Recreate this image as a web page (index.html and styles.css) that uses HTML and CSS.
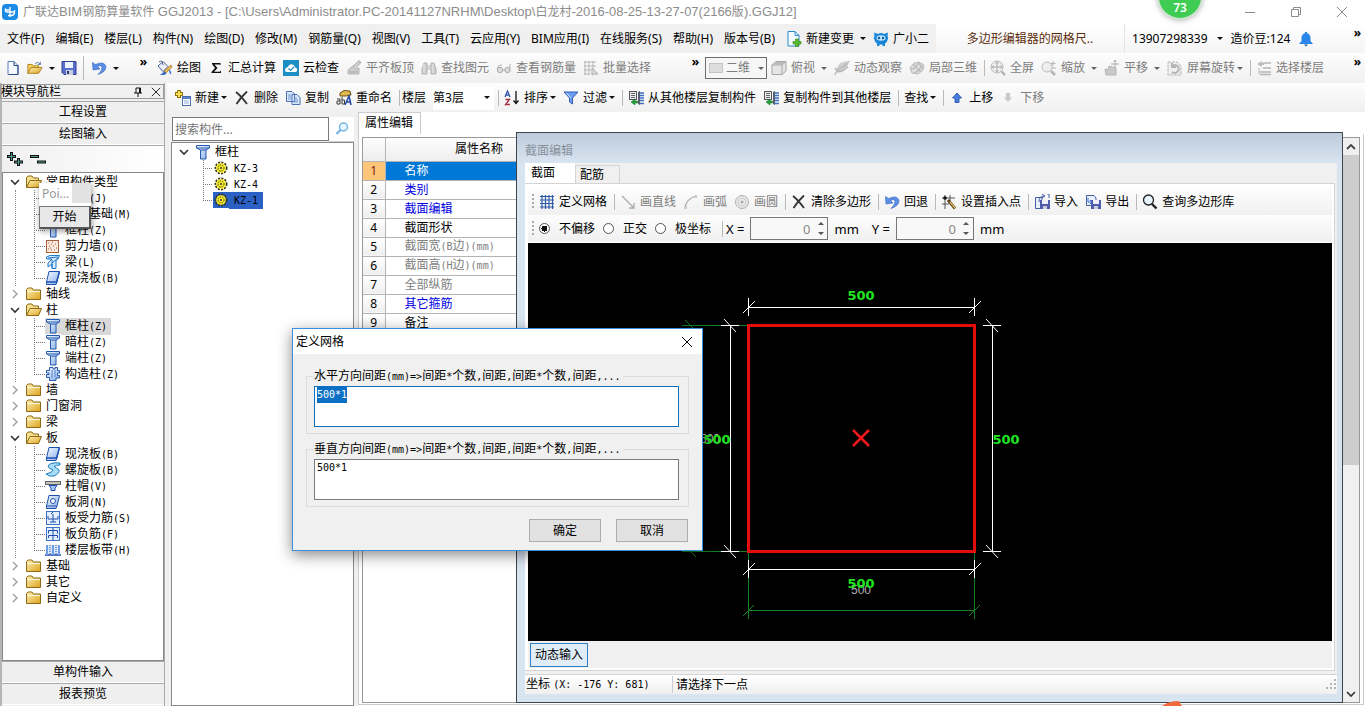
FILE: index.html
```html
<!DOCTYPE html>
<html lang="zh-CN">
<head>
<meta charset="utf-8">
<title>广联达BIM钢筋算量软件 GGJ2013</title>
<link rel="stylesheet" href="styles.css">
</head>
<body>
<svg class="defs" width="0" height="0" aria-hidden="true">
<defs>
<linearGradient id="gold" x1="0" y1="0" x2="1" y2="1"><stop offset="0" stop-color="#fff3b8"/><stop offset="1" stop-color="#dca21e"/></linearGradient>
<linearGradient id="blue" x1="0" y1="0" x2="1" y2="1"><stop offset="0" stop-color="#f4f9ff"/><stop offset="1" stop-color="#86aeea"/></linearGradient>
<symbol id="i-app" viewBox="0 0 16 16"><rect width="16" height="16" rx="4" fill="#1b8be6"/><path d="M3.500 4.500V7Q3.500 8 5 8H13M12.500 6V8Q12.500 11.500 9 11.500H6M8 3V13M4 6H7" fill="none" stroke="#fff" stroke-width="1.400"/></symbol>
<symbol id="i-new" viewBox="0 0 16 16"><path d="M3 1.500H9L13 5.500V14.500H3Z" fill="#f5f9ff" stroke="#5b7fb9"/><path d="M9 1.500V5.500H13V14.500H4" fill="none" stroke="#27477f"/></symbol>
<symbol id="i-open" viewBox="0 0 18 16"><path d="M1 14V4H6L7 5.500H13V8" fill="#f3cf62" stroke="#a87b12"/><path d="M1 14L4.500 7.500H17L13 14Z" fill="url(#gold)" stroke="#a87b12"/><path d="M9 3Q12 0 15 3.500M15 1V4H12" fill="none" stroke="#52749f"/></symbol>
<symbol id="i-save" viewBox="0 0 16 16"><path d="M1 1.500H15V14.500H3L1 12.500Z" fill="#5a6fd0" stroke="#34408f"/><rect x="4" y="2" width="8" height="6" fill="#eef3ff"/><rect x="5" y="10" width="7" height="5" fill="#c8cde0"/><rect x="6" y="11" width="2" height="3" fill="#333c78"/></symbol>
<symbol id="i-undo" viewBox="0 0 16 16"><path d="M1.500 2.500L2 10L9 9L6.500 6.500Q10.500 4.500 11 7.500Q11 11 7 14.500Q15 12 15 6.500Q13 .5 4.500 4.500Z" fill="#5c8ee6" stroke="#3163bd" stroke-width=".6"/></symbol>
<symbol id="i-paint" viewBox="0 0 16 16"><path d="M1 6L6 1.500L11 6.500L6 11.500Z" fill="#e9eef8" stroke="#4a5e8c"/><path d="M2 2Q5 -1 6 5" fill="none" stroke="#4a5e8c"/><path d="M14 5L15 7L9 13L7 11Z" fill="#e7b850" stroke="#8a6512" stroke-width=".6"/><path d="M7 11L9.500 13.500Q7 16 3 14.500Q6 14 7 11Z" fill="#3767b8"/><path d="M12 9Q15 12 14 14Q12 15 12 9" fill="#4b7cda"/></symbol>
<symbol id="i-sum" viewBox="0 0 16 16"><path d="M4 3H12.500V5.500L11.500 4.500H6.500L9.500 8L6 11.700H11.700L13 10.500V13H3.500V12L7 8L4 4Z" fill="#111"/></symbol>
<symbol id="i-cloud" viewBox="0 0 16 16"><rect width="16" height="16" fill="#1d8fc4"/><path d="M3.500 12Q1 11 2.500 8.500Q3.500 7 5 7Q6 3.500 9.500 4.500Q11.500 5 12 7.500Q15 8 14 11Q13.500 12 12 12Z" fill="#fff"/><path d="M5.500 8.500L7.500 10.500L11 7" fill="none" stroke="#1d8fc4" stroke-width="1.200"/></symbol>
<symbol id="i-align" viewBox="0 0 16 16"><path d="M2 10L8 5L8 8H13V14H2Z" fill="#ccc" stroke="#b5b5b5"/><path d="M8 6L13 1L14.500 2.500L10 7M3 12H12" fill="none" stroke="#b5b5b5" stroke-width="1.500"/></symbol>
<symbol id="i-binoc" viewBox="0 0 16 16"><path d="M3 3H6V6H10V3H13L15 9V14H10V9H6V14H1V9Z" fill="#c9c9c9" stroke="#b5b5b5"/><path d="M3 4V13M12 4V13M8 6V9" stroke="#eee"/></symbol>
<symbol id="i-glasses" viewBox="0 0 16 16"><path d="M7 10.500Q8 9 9 10.500M1 9Q3 4 6 5M15 4Q13 4 14 9" fill="none" stroke="#aaa"/><circle cx="4" cy="10" r="2.700" fill="#ddd" stroke="#aaa"/><circle cx="11.500" cy="10" r="2.700" fill="#ddd" stroke="#aaa"/></symbol>
<symbol id="i-batch" viewBox="0 0 16 16"><path d="M1 2H13M1 6H13M1 10H8M1 14H7M2 1V15M6 1V15M10 1V9" stroke="#b5b5b5" fill="none"/><path d="M9 8L15 14H11L9 15Z" fill="#ddd" stroke="#aaa"/></symbol>
<symbol id="i-rect" viewBox="0 0 16 16"><rect x="1.500" y="3.500" width="13" height="9" fill="#ddd" stroke="#c3c3c3"/></symbol>
<symbol id="i-cube" viewBox="0 0 16 16"><path d="M1 5L5 1.500H15V11L11 14.500H1Z" fill="#e6e6e6" stroke="#a5a5a5"/><path d="M1 5H11V14.500M11 5L15 1.500" fill="none" stroke="#a5a5a5"/><path d="M2 4.500L5 2H14L11 4.500Z" fill="#bbb"/></symbol>
<symbol id="i-orbit" viewBox="0 0 16 16"><path d="M2 9L6 3L13 1L14 6L9 12L3 13Z" fill="#cfcfcf"/><path d="M1 15Q2 10 8 7T15 1M1 8Q4 15 14 7" fill="none" stroke="#b5b5b5" stroke-width="1.300"/></symbol>
<symbol id="i-local" viewBox="0 0 16 16"><path d="M1 8L5 3L10 2L15 5L14 10L9 14L3 13Z" fill="#dedede" stroke="#bbb"/><path d="M4 4L12 12M9 2L14 9M2 9Q7 9 9 3M5 13Q11 11 13 5" fill="none" stroke="#bbb" stroke-width="1.300"/></symbol>
<symbol id="i-fit" viewBox="0 0 16 16"><circle cx="7" cy="7" r="6" fill="#eee" stroke="#b5b5b5"/><path d="M7 2V12M2 7H12M5.500 3.500L7 2L8.500 3.500M5.500 10.500L7 12L8.500 10.500M3.500 5.500L2 7L3.500 8.500M10.500 5.500L12 7L10.500 8.500" fill="none" stroke="#aaa"/><path d="M11.500 11.500L15 15" stroke="#aaa" stroke-width="2"/></symbol>
<symbol id="i-zoomg" viewBox="0 0 16 16"><circle cx="6" cy="7" r="5" fill="#eee" stroke="#bbb"/><path d="M10 11L14 15" stroke="#b5b5b5" stroke-width="2.500"/><path d="M12 1V6M9.500 3.500H14.500M11 8H15" stroke="#b5b5b5"/></symbol>
<symbol id="i-pan" viewBox="0 0 16 16"><path d="M2 15L1 9L4 10L5 6L12 8L12 15Z" fill="#c9c9c9" stroke="#b5b5b5"/><path d="M11 0V8M7 4H15M9.500 1.500L11 0L12.500 1.500" stroke="#aaa" fill="none"/></symbol>
<symbol id="i-rot" viewBox="0 0 16 16"><path d="M1 2H10L14 6V15H1Z" fill="#eee" stroke="#b5b5b5" stroke-dasharray="3 1"/><path d="M5 6A4 4 0 1 1 5 12M5 3V7H9" fill="none" stroke="#b5b5b5" stroke-width="2"/></symbol>
<symbol id="i-floors" viewBox="0 0 16 16"><path d="M7 3H15M7 8H15M4 12H15M4 14.500H15" stroke="#b5b5b5" stroke-width="1.500"/><path d="M6 1L1 4L6 7V5H8V3H6Z" fill="#bbb"/><path d="M3 8V14" stroke="#b5b5b5"/></symbol>
<symbol id="i-add" viewBox="0 0 16 16"><path d="M4 0V8M0 4H8" stroke="#93720c" stroke-width="4"/><path d="M4 1V7M1 4H7" stroke="#f7df4e" stroke-width="2"/><rect x="7.500" y="6.500" width="8" height="9" fill="#fff" stroke="#4b6ea8"/><path d="M8 8H15" stroke="#5681cc" stroke-width="2"/><path d="M9 11H14M9 13H14" stroke="#8badde"/></symbol>
<symbol id="i-x" viewBox="0 0 16 16"><path d="M2 2Q7 6 13 14M13 1.500Q7 7 2.500 14" fill="none" stroke="#333" stroke-width="1.800"/></symbol>
<symbol id="i-copy" viewBox="0 0 16 16"><path d="M1.500 1.500H7L9.500 4V11.500H1.500ZM7 4.500H12L15 7.500V14.500H7Z" fill="#dce8fb" stroke="#4b6fb5"/><path d="M3 5H6M3 7H6M3 9H6M9 8H12M9 10H13M9 12H13" stroke="#6f93d2"/></symbol>
<symbol id="i-ren" viewBox="0 0 16 16"><path d="M4 3L8 .5L14 1L15 5L10 6L4 6Z" fill="#e1b84d" stroke="#6b5116"/><path d="M1 9H4V14H1V11H4M6 7V14H8.500V10H6" fill="none" stroke="#3d3d3d"/><path d="M9 15L13 6L15 15M10 12H14.500" fill="none" stroke="#294da3" stroke-width="1.600"/></symbol>
<symbol id="i-sort" viewBox="0 0 16 16"><path d="M1 7L3.500 1L6 7M2 5H5" fill="none" stroke="#3058a8" stroke-width="1.300"/><path d="M1.500 9.500H5.500L1.500 14.500H6" fill="none" stroke="#a23344" stroke-width="1.300"/><path d="M12 1V13M9.500 10.500L12 13.500L14.500 10.500" fill="none" stroke="#111" stroke-width="1.300"/></symbol>
<symbol id="i-filter" viewBox="0 0 16 16"><path d="M1 2H15L9.500 8V14L6.500 12V8Z" fill="#6b9df0" stroke="#2f5fb6"/><path d="M3.500 3L8 8" stroke="#d9e8ff"/></symbol>
<symbol id="i-cpf" viewBox="0 0 16 16"><rect x="1.500" y="1.500" width="7" height="8" fill="#e8ecf2" stroke="#555"/><path d="M3 3.500H7M3 5.500H7M3 7.500H7" stroke="#666"/><path d="M10 2L12 1V15L10 14Z" fill="#555f70"/><path d="M12 3H16M12 5.500H16M12 8H16M12 10.500H16M12 13.500H16" stroke="#3f6fc0" stroke-width="1.600"/><path d="M7 9L3 12L7 15V13H9.500V11H7Z" fill="#22a03a" stroke="#0f6b22" stroke-width=".5"/></symbol>
<symbol id="i-up" viewBox="0 0 16 16"><path d="M8 3L12.500 8H10V12.500H6V8H3.500Z" fill="#4a7fe0" stroke="#1d47a3" stroke-width=".8"/></symbol>
<symbol id="i-down" viewBox="0 0 16 16"><path d="M8 12L12 7.500H10V3H6V7.500H4Z" fill="#c9c9c9"/></symbol>
<symbol id="i-doc" viewBox="0 0 16 16"><path d="M2 .5H9L13 4.500V15H2Z" fill="#f3faff" stroke="#2c88c6"/><path d="M9 .5V4.500H13" fill="none" stroke="#2c88c6"/><path d="M9.500 8H12.500V10.500H15V13H12.500V15.500H9.500V13H7V10.500H9.500Z" fill="#5cb82e" stroke="#2f8a16" stroke-width=".6"/></symbol>
<symbol id="i-robot" viewBox="0 0 16 16"><path d="M1 1.500L5 3Q8 1 11 3L15 1.500L14.500 5Q16 7 14.500 9Q14 12 12 12.500V15H9.500V13.500H6.500V15H4V12.500Q2 12 1.500 9Q0 7 1.500 5Z" fill="#1a86d8"/><ellipse cx="8" cy="7" rx="4.500" ry="2.800" fill="#bfe4fb"/><circle cx="6" cy="7" r="1.200" fill="#145c9e"/><circle cx="10" cy="7" r="1.200" fill="#145c9e"/></symbol>
<symbol id="i-bell" viewBox="0 0 16 16"><path d="M7 1H9V2Q12 3 12.500 6V10L15 13H1L3.500 10V6Q4 3 7 2Z" fill="#2a86e8"/><path d="M6 13.500H10L8 15.500Z" fill="#174f93"/></symbol>
<symbol id="i-mag" viewBox="0 0 16 16"><circle cx="9.500" cy="6" r="4" fill="#eaf6ff" stroke="#6fb4e0" stroke-width="1.500"/><path d="M6.500 9L2.500 13" stroke="#6fb4e0" stroke-width="2.200"/></symbol>
<symbol id="i-mag2" viewBox="0 0 16 16"><circle cx="6.500" cy="6" r="5" fill="#e8f4ff" stroke="#222" stroke-width="1.300"/><path d="M10 10L14.500 14.500" stroke="#222" stroke-width="2.400"/></symbol>
<symbol id="i-folder" viewBox="0 0 16 16"><path d="M.5 13.500V3.500L2 2H6L7.500 4H14.500V13.500Z" fill="url(#gold)" stroke="#8f6914"/><path d="M1.500 5.500H14" stroke="#fff8d8"/></symbol>
<symbol id="i-fopen" viewBox="0 0 16 16"><path d="M.5 13.500V3.500L2 2H6L7.500 4H12.500V7" fill="#f6df8e" stroke="#8f6914"/><path d="M.5 13.500L4 6.500H15.500L12.500 13.500Z" fill="url(#gold)" stroke="#8f6914"/></symbol>
<symbol id="i-col" viewBox="0 0 16 16"><path d="M1.500 1.500H14.500V4L11 6V15H5.500V6L1.500 4Z" fill="url(#blue)" stroke="#2558b0"/><path d="M2 4H14M5.500 6H11" stroke="#2558b0"/></symbol>
<symbol id="i-wall" viewBox="0 0 16 16"><rect x="1.500" y="2.500" width="12" height="12" fill="#fbe9df" stroke="#a3613c"/><path d="M3 5H4M7 4H8M10 6H11M4 8H5M8 8H9M11 10H12M3 11H4M6 12H7M9 12H10M6 6H7M5 10H6" stroke="#9a5c42"/></symbol>
<symbol id="i-beam" viewBox="0 0 16 16"><path d="M1.500 3L5 1.500H14.500L13 5L11 6V14.500H7V10L3 13V9L7 5H1.500Z" fill="#d8ecff" stroke="#1f77c8"/><path d="M3 4L13 3M7 9L13 4M7 6V14" stroke="#1f77c8" fill="none"/></symbol>
<symbol id="i-slab" viewBox="0 0 16 16"><path d="M4 1.500H14.500L12 12L11 14.500H1.500V12Z" fill="url(#blue)" stroke="#1e4fae"/><path d="M1.500 12H11.500L14.500 1.500" fill="none" stroke="#1e4fae" stroke-width="1.300"/></symbol>
<symbol id="i-ccol" viewBox="0 0 16 16"><path d="M4.500 1.500H8V3H10V1.500H12.500V4.500H14.500V7H12.500V9.500H14.500V12H11V14.500H4.500V11.500H1.500V8.500H4V7H1.500V4.500H4.500Z" fill="url(#blue)" stroke="#2558b0"/><path d="M10 4V11M7 4V12" fill="none" stroke="#5a86d0"/></symbol>
<symbol id="i-spiral" viewBox="0 0 16 16"><path d="M15 1Q5 0 3 4Q3 6 8 8Q8 10 1 12Q4 15 9 14Q15 11 14 8Q12 6 9 4.500Q11 3 15 3Z" fill="#a8dcf8" stroke="#1c7dbd"/></symbol>
<symbol id="i-cap" viewBox="0 0 16 16"><rect x=".5" y="3.500" width="15" height="3" fill="#c9c3ae" stroke="#5b6470"/><path d="M4 7.500H12L10 10V12.500H6V10Z" fill="#a8c8f5" stroke="#1e4fae"/></symbol>
<symbol id="i-hole" viewBox="0 0 16 16"><path d="M4 1.500H14.500L12 12L11 14.500H1.500V12Z" fill="url(#blue)" stroke="#1e4fae"/><circle cx="8" cy="7" r="2.500" fill="#fff" stroke="#1e4fae"/><path d="M1.500 12H11.500" stroke="#1e4fae"/></symbol>
<symbol id="i-rebar" viewBox="0 0 16 16"><rect x="1.500" y="1.500" width="13" height="13" fill="#e3eeff" stroke="#3d71c5"/><path d="M3 6V9H13V6M8 2L6 4M8 4V12M5 12H11" fill="none" stroke="#1e4fae"/></symbol>
<symbol id="i-neg" viewBox="0 0 16 16"><rect x="1.500" y="1.500" width="13" height="13" fill="#e3eeff" stroke="#3d71c5"/><path d="M3.500 7.500V4.500H12.500V7.500M3.500 12V9.500H12.500V12M8 2V14" fill="none" stroke="#1e4fae"/></symbol>
<symbol id="i-band" viewBox="0 0 16 16"><rect x="1" y="3" width="14" height="10" fill="#dbe8fc"/><path d="M0 13H16" stroke="#1e4fae" stroke-width="1.500"/><path d="M2 3V13M8 3V13M14 3V13" stroke="#6f9de6" stroke-width="2"/><path d="M5 3V13M11 3V13" stroke="#1e4fae" stroke-dasharray="1 1"/></symbol>
<symbol id="i-gear" viewBox="0 0 16 16"><circle cx="8" cy="8" r="5.500" fill="none" stroke="#3a3a10" stroke-width="2" stroke-dasharray="2 1.200"/><circle cx="8" cy="8" r="4.800" fill="#f8ee28"/><circle cx="8" cy="8" r="3" fill="none" stroke="#4a4a10" stroke-dasharray="1.500 1"/><circle cx="8" cy="8" r="1" fill="#333"/></symbol>
<symbol id="i-grid" viewBox="0 0 16 16"><path d="M3 1V15M6.500 1V15M10 1V15M13.500 1V15M1 2.500H15M1 6H15M1 9.500H15M1 13H15" stroke="#2f5aa8" stroke-width="1.200"/></symbol>
<symbol id="i-line" viewBox="0 0 16 16"><path d="M2 2L13 13M14 9V14H9" fill="none" stroke="#aaa" stroke-width="1.300"/></symbol>
<symbol id="i-arc" viewBox="0 0 16 16"><path d="M2 14Q3 5 13 2" fill="none" stroke="#aaa" stroke-width="1.300"/><path d="M1 12H4V15H1ZM12 1H14V4H12Z" fill="#ccc"/></symbol>
<symbol id="i-circ" viewBox="0 0 16 16"><circle cx="8" cy="8" r="6.500" fill="#e9e9e9" stroke="#b0b0b0"/><circle cx="8" cy="8" r="4" fill="none" stroke="#ccc"/><circle cx="8" cy="8" r="1.500" fill="#aaa"/></symbol>
<symbol id="i-ins" viewBox="0 0 16 16"><path d="M4 1V15M9 1V7M1 4H14M1 10H8" stroke="#555"/><circle cx="4" cy="4" r="1.800" fill="#111"/><path d="M7 6L14 14.500" stroke="#5c4218" stroke-width="2.800"/><path d="M9 8L14 14" stroke="#e0ba5e" stroke-width="1.300"/></symbol>
<symbol id="i-imp" viewBox="0 0 16 16"><path d="M1.500 3.500H8V14.500H1.500Z" fill="#e8efff" stroke="#4560a6"/><rect x="6" y="6" width="10" height="9" fill="#4f5cac"/><rect x="8" y="6" width="6" height="4" fill="#eef"/><rect x="9" y="12" width="4" height="3" fill="#ccd"/><path d="M5 8Q5 2 10 2M8 0L11 2L8 4M13 0H15V4" fill="none" stroke="#4560a6"/></symbol>
<symbol id="i-exp" viewBox="0 0 16 16"><path d="M1.500 1.500H9L11 4V11.500H1.500Z" fill="#e8efff" stroke="#4560a6"/><rect x="6" y="6" width="10" height="9" fill="#4f5cac"/><rect x="8" y="6" width="6" height="4" fill="#eef"/><rect x="9" y="12" width="4" height="3" fill="#ccd"/><path d="M3 4V8H6M5 6L7 8L5 10" fill="none" stroke="#3768c4"/></symbol>
<symbol id="i-pin" viewBox="0 0 10 10"><path d="M3 1H7.500V6M3 1V6M1 6H9M5 6V10M6.500 1V6" fill="none" stroke="#111"/></symbol>
<symbol id="i-close" viewBox="0 0 12 12"><path d="M1 1L11 11M11 1L1 11" fill="none" stroke="currentColor"/></symbol>
<symbol id="i-min" viewBox="0 0 12 12"><path d="M1 6.500H11" stroke="currentColor"/></symbol>
<symbol id="i-max" viewBox="0 0 12 12"><path d="M1.500 3.500H8.500V10.500H1.500ZM3.500 3V1.500H10.500V8.500H9" fill="none" stroke="currentColor"/></symbol>
<symbol id="i-cd" viewBox="0 0 10 10"><path d="M1 3L5 7L9 3" fill="none" stroke="#333" stroke-width="1.600"/></symbol>
<symbol id="i-cr" viewBox="0 0 10 10"><path d="M3 1L7 5L3 9" fill="none" stroke="#999" stroke-width="1.300"/></symbol>
<symbol id="i-cu" viewBox="0 0 10 10"><path d="M1 7L5 3L9 7" fill="none" stroke="#444" stroke-width="1.800"/></symbol>
<symbol id="i-plus2" viewBox="0 0 16 14"><path d="M4.500 0V9M0 4.500H9M11.500 6V14M7 10H16" stroke="#111" stroke-width="3"/><path d="M4.500 1V8M1 4.500H8M11.500 7V13M8 10H15" stroke="#4d9c8d"/></symbol>
<symbol id="i-minus2" viewBox="0 0 16 14"><path d="M0 4.500H9M7 10H16" stroke="#111" stroke-width="3"/><path d="M1 4.500H8M8 10H15" stroke="#4d9c8d"/></symbol>
</defs>
</svg>

<header class="titlebar">
  <svg class="ic"><use href="#i-app"/></svg>
  <h1>广联达<span>BIM</span>钢筋算量软件<span> GGJ2013 - [C:\Users\Administrator.PC-20141127NRHM\Desktop\</span>白龙村<span>-2016-08-25-13-27-07(2166</span>版<span>).GGJ12]</span></h1>
  <div class="winbtns">
    <button aria-label="最小化"><svg><use href="#i-min"/></svg></button>
    <button aria-label="还原"><svg><use href="#i-max"/></svg></button>
    <button aria-label="关闭"><svg><use href="#i-close"/></svg></button>
  </div>
  <div class="score">73</div>
</header>

<nav class="menubar">
  <div class="menus">
    <button>文件(F)</button><button>编辑(E)</button><button>楼层(L)</button><button>构件(N)</button><button>绘图(D)</button><button>修改(M)</button><button>钢筋量(Q)</button><button>视图(V)</button><button>工具(T)</button><button>云应用(Y)</button><button>BIM应用(I)</button><button>在线服务(S)</button><button>帮助(H)</button><button>版本号(B)</button>
    <button class="tb"><svg class="ic"><use href="#i-doc"/></svg>新建变更<i class="dd"></i></button>
    <button class="tb"><svg class="ic"><use href="#i-robot"/></svg>广小二</button>
  </div>
  <a class="tip" href="#">多边形编辑器的网格尺..</a>
  <div class="account">
    <button class="tb">13907298339<i class="dd"></i></button>
    <button class="tb">造价豆:124</button>
    <button class="tb" aria-label="通知"><svg class="ic"><use href="#i-bell"/></svg></button>
  </div>
  <button class="more">»</button>
</nav>

<div class="toolrow">
  <div class="toolbar tb-file">
    <button class="tb" aria-label="新建"><svg class="ic"><use href="#i-new"/></svg></button>
    <button class="tb" aria-label="打开"><svg class="ic"><use href="#i-open"/></svg><i class="dd"></i></button>
    <button class="tb" aria-label="保存"><svg class="ic"><use href="#i-save"/></svg></button>
    <i class="sep"></i>
    <button class="tb" aria-label="撤销"><svg class="ic"><use href="#i-undo"/></svg><i class="dd"></i></button>
    <button class="more">»</button>
  </div>
  <div class="toolbar tb-calc">
    <button class="tb"><svg class="ic"><use href="#i-paint"/></svg>绘图</button>
    <button class="tb"><svg class="ic"><use href="#i-sum"/></svg>汇总计算</button>
    <button class="tb"><svg class="ic"><use href="#i-cloud"/></svg>云检查</button>
    <button class="tb off"><svg class="ic"><use href="#i-align"/></svg>平齐板顶</button>
    <button class="tb off"><svg class="ic"><use href="#i-binoc"/></svg>查找图元</button>
    <button class="tb off"><svg class="ic"><use href="#i-glasses"/></svg>查看钢筋量</button>
    <button class="tb off"><svg class="ic"><use href="#i-batch"/></svg>批量选择</button>
    <button class="more">»</button>
  </div>
  <div class="toolbar tb-view">
    <label class="viewmode off"><svg class="ic"><use href="#i-rect"/></svg><select aria-label="视图模式"><option>二维</option></select><i class="dd"></i></label>
    <button class="tb off"><svg class="ic"><use href="#i-cube"/></svg>俯视<i class="dd"></i></button>
    <button class="tb off"><svg class="ic"><use href="#i-orbit"/></svg>动态观察</button>
    <button class="tb off"><svg class="ic"><use href="#i-local"/></svg>局部三维</button>
    <i class="sep"></i>
    <button class="tb off"><svg class="ic"><use href="#i-fit"/></svg>全屏</button>
    <button class="tb off"><svg class="ic"><use href="#i-zoomg"/></svg>缩放<i class="dd"></i></button>
    <button class="tb off"><svg class="ic"><use href="#i-pan"/></svg>平移<i class="dd"></i></button>
    <button class="tb off tight"><svg class="ic"><use href="#i-rot"/></svg>屏幕旋转<i class="dd"></i></button>
    <i class="sep"></i>
    <button class="tb off"><svg class="ic"><use href="#i-floors"/></svg>选择楼层</button>
    <button class="more">»</button>
  </div>
</div>

<main class="main">
  <aside class="side">
    <div class="side-head"><span>模块导航栏</span><button aria-label="固定"><svg><use href="#i-pin"/></svg></button><button aria-label="关闭"><svg><use href="#i-close"/></svg></button></div>
    <button class="bar">工程设置</button>
    <button class="bar">绘图输入</button>
    <div class="side-tools"><button aria-label="全部展开"><svg><use href="#i-plus2"/></svg></button><button aria-label="全部折叠"><svg><use href="#i-minus2"/></svg></button></div>
    <ul class="tree">
      <li><div class="row"><svg class="ch"><use href="#i-cd"/></svg><svg class="ic"><use href="#i-fopen"/></svg><span>常用构件类型</span></div>
        <ul>
          <li><svg class="ic"><use href="#i-slab"/></svg><span>轴网<b>(J)</b></span></li>
          <li><svg class="ic"><use href="#i-slab"/></svg><span>筏板基础<b>(M)</b></span></li>
          <li><svg class="ic"><use href="#i-col"/></svg><span>框柱<b>(Z)</b></span></li>
          <li><svg class="ic"><use href="#i-wall"/></svg><span>剪力墙<b>(Q)</b></span></li>
          <li><svg class="ic"><use href="#i-beam"/></svg><span>梁<b>(L)</b></span></li>
          <li><svg class="ic"><use href="#i-slab"/></svg><span>现浇板<b>(B)</b></span></li>
        </ul></li>
      <li><div class="row"><svg class="ch"><use href="#i-cr"/></svg><svg class="ic"><use href="#i-folder"/></svg><span>轴线</span></div></li>
      <li><div class="row"><svg class="ch"><use href="#i-cd"/></svg><svg class="ic"><use href="#i-fopen"/></svg><span>柱</span></div>
        <ul>
          <li class="cur"><svg class="ic"><use href="#i-col"/></svg><span>框柱<b>(Z)</b></span></li>
          <li><svg class="ic"><use href="#i-col"/></svg><span>暗柱<b>(Z)</b></span></li>
          <li><svg class="ic"><use href="#i-col"/></svg><span>端柱<b>(Z)</b></span></li>
          <li><svg class="ic"><use href="#i-ccol"/></svg><span>构造柱<b>(Z)</b></span></li>
        </ul></li>
      <li><div class="row"><svg class="ch"><use href="#i-cr"/></svg><svg class="ic"><use href="#i-folder"/></svg><span>墙</span></div></li>
      <li><div class="row"><svg class="ch"><use href="#i-cr"/></svg><svg class="ic"><use href="#i-folder"/></svg><span>门窗洞</span></div></li>
      <li><div class="row"><svg class="ch"><use href="#i-cr"/></svg><svg class="ic"><use href="#i-folder"/></svg><span>梁</span></div></li>
      <li><div class="row"><svg class="ch"><use href="#i-cd"/></svg><svg class="ic"><use href="#i-fopen"/></svg><span>板</span></div>
        <ul>
          <li><svg class="ic"><use href="#i-slab"/></svg><span>现浇板<b>(B)</b></span></li>
          <li><svg class="ic"><use href="#i-spiral"/></svg><span>螺旋板<b>(B)</b></span></li>
          <li><svg class="ic"><use href="#i-cap"/></svg><span>柱帽<b>(V)</b></span></li>
          <li><svg class="ic"><use href="#i-hole"/></svg><span>板洞<b>(N)</b></span></li>
          <li><svg class="ic"><use href="#i-rebar"/></svg><span>板受力筋<b>(S)</b></span></li>
          <li><svg class="ic"><use href="#i-neg"/></svg><span>板负筋<b>(F)</b></span></li>
          <li><svg class="ic"><use href="#i-band"/></svg><span>楼层板带<b>(H)</b></span></li>
        </ul></li>
      <li><div class="row"><svg class="ch"><use href="#i-cr"/></svg><svg class="ic"><use href="#i-folder"/></svg><span>基础</span></div></li>
      <li><div class="row"><svg class="ch"><use href="#i-cr"/></svg><svg class="ic"><use href="#i-folder"/></svg><span>其它</span></div></li>
      <li><div class="row"><svg class="ch"><use href="#i-cr"/></svg><svg class="ic"><use href="#i-folder"/></svg><span>自定义</span></div></li>
    </ul>
    <button class="bar">单构件输入</button>
    <button class="bar">报表预览</button>
  </aside>

  <section class="work">
    <div class="toolbar tb-comp">
      <button class="tb tight"><svg class="ic"><use href="#i-add"/></svg>新建<i class="dd"></i></button>
      <button class="tb"><svg class="ic"><use href="#i-x"/></svg>删除</button>
      <button class="tb"><svg class="ic"><use href="#i-copy"/></svg>复制</button>
      <button class="tb"><svg class="ic"><use href="#i-ren"/></svg>重命名</button>
      <i class="sep thin"></i>
      <label class="floor">楼层<span><select><option>第3层</option></select><i class="dd"></i></span></label>
      <i class="sep"></i>
      <button class="tb tight"><svg class="ic"><use href="#i-sort"/></svg>排序<i class="dd"></i></button>
      <button class="tb tight"><svg class="ic"><use href="#i-filter"/></svg>过滤<i class="dd"></i></button>
      <i class="sep"></i>
      <button class="tb"><svg class="ic"><use href="#i-cpf"/></svg>从其他楼层复制构件</button>
      <button class="tb"><svg class="ic"><use href="#i-cpf"/></svg>复制构件到其他楼层</button>
      <i class="sep"></i>
      <button class="tb tight">查找<i class="dd"></i></button>
      <i class="sep"></i>
      <button class="tb"><svg class="ic"><use href="#i-up"/></svg>上移</button>
      <button class="tb off"><svg class="ic"><use href="#i-down"/></svg>下移</button>
    </div>
    <div class="panes">
      <div class="comp">
        <div class="search"><input type="text" placeholder="搜索构件..." aria-label="搜索构件"><button aria-label="搜索"><svg class="ic"><use href="#i-mag"/></svg></button></div>
        <ul class="tree ctree">
          <li><div class="row"><svg class="ch"><use href="#i-cd"/></svg><svg class="ic"><use href="#i-col"/></svg><span>框柱</span></div>
            <ul>
              <li><svg class="ic"><use href="#i-gear"/></svg><span><b>KZ-3</b></span></li>
              <li><svg class="ic"><use href="#i-gear"/></svg><span><b>KZ-4</b></span></li>
              <li class="sel"><svg class="ic"><use href="#i-gear"/></svg><span><b>KZ-1</b></span></li>
            </ul></li>
        </ul>
      </div>
      <div class="props">
        <div class="ptab">属性编辑</div>
        <div class="pbody">
          <div class="grid">
            <table>
              <colgroup><col class="c1"><col class="c2"><col></colgroup>
              <thead><tr><th></th><th>属性名称</th><th></th></tr></thead>
              <tbody>
                <tr class="on"><th>1</th><td>名称</td><td></td></tr>
                <tr class="link"><th>2</th><td>类别</td><td></td></tr>
                <tr class="link"><th>3</th><td>截面编辑</td><td></td></tr>
                <tr><th>4</th><td>截面形状</td><td></td></tr>
                <tr class="dim"><th>5</th><td>截面宽<b>(B</b>边<b>)(mm)</b></td><td></td></tr>
                <tr class="dim"><th>6</th><td>截面高<b>(H</b>边<b>)(mm)</b></td><td></td></tr>
                <tr class="dim"><th>7</th><td>全部纵筋</td><td></td></tr>
                <tr class="link"><th>8</th><td>其它箍筋</td><td></td></tr>
                <tr><th>9</th><td>备注</td><td></td></tr>
              </tbody>
            </table>
            <div class="scroll"><button aria-label="向上滚动"><svg><use href="#i-cu"/></svg></button><i class="thumb"></i><button aria-label="向下滚动"><svg><use href="#i-cd"/></svg></button></div>
          </div>
        </div>

        <section class="child">
          <h2>截面编辑</h2>
          <div class="cbody">
            <div class="ctabs"><button class="active">截面</button><button>配筋</button></div>
            <div class="cpage">
              <div class="toolbar ctb">
                <i class="grip"></i>
                <button class="tb"><svg class="ic"><use href="#i-grid"/></svg>定义网格</button>
                <i class="sep"></i>
                <button class="tb off"><svg class="ic"><use href="#i-line"/></svg>画直线</button>
                <button class="tb off"><svg class="ic"><use href="#i-arc"/></svg>画弧</button>
                <button class="tb off"><svg class="ic"><use href="#i-circ"/></svg>画圆</button>
                <i class="sep"></i>
                <button class="tb"><svg class="ic"><use href="#i-x"/></svg>清除多边形</button>
                <i class="sep"></i>
                <button class="tb"><svg class="ic"><use href="#i-undo"/></svg>回退</button>
                <i class="sep"></i>
                <button class="tb"><svg class="ic"><use href="#i-ins"/></svg>设置插入点</button>
                <i class="sep"></i>
                <button class="tb"><svg class="ic"><use href="#i-imp"/></svg>导入</button>
                <button class="tb"><svg class="ic"><use href="#i-exp"/></svg>导出</button>
                <i class="sep"></i>
                <button class="tb"><svg class="ic"><use href="#i-mag2"/></svg>查询多边形库</button>
              </div>
              <div class="toolbar ctb">
                <i class="grip"></i>
                <label class="rad"><input type="radio" name="off" checked>不偏移</label>
                <label class="rad"><input type="radio" name="off">正交</label>
                <label class="rad"><input type="radio" name="off">极坐标</label>
                <i class="sep wide"></i>
                <label class="num">X = <span class="spin"><input type="text" value="0"><span><button aria-label="X 增加"><i class="up"></i></button><button aria-label="X 减少"><i class="dd"></i></button></span></span> mm</label>
                <label class="num">Y = <span class="spin"><input type="text" value="0"><span><button aria-label="Y 增加"><i class="up"></i></button><button aria-label="Y 减少"><i class="dd"></i></button></span></span> mm</label>
              </div>
              <svg class="canvas" role="img" aria-label="截面图">
                <g stroke="#14801f" fill="none" shape-rendering="crispEdges">
                  <path d="M154 82.500H221M154 308.500H221M220.500 308V376M446.500 308V376M220 367.500H447M215 373L226 362M441 373L452 362M157 77L168 88M157 303L168 314"/>
                </g>
                <g stroke="#fff" fill="none">
                  <path shape-rendering="crispEdges" d="M220 64.500H447M220.500 55V73M446.500 55V73M202.500 82V309M193 82.500H211M193 308.500H211M464.500 82V309M455 82.500H473M455 308.500H473M220 326.500H447M220.500 317V335M446.500 317V335"/>
                  <path d="M215 70L227 58M441 70L453 58M215 332L227 320M441 332L453 320M196 76L208 89M196 302L208 315M458 76L470 89M458 302L470 315"/>
                </g>
                <rect x="220.500" y="82.500" width="226" height="226" fill="none" stroke="#e60c0c" stroke-width="3"/>
                <path d="M325 187L341 203M341 187L325 203" stroke="#f01818" stroke-width="2.500"/>
                <text class="ghost" x="333" y="351">500</text>
                <text class="ghost" x="182" y="200">500</text>
                <text x="333" y="57">500</text>
                <text x="333" y="345">500</text>
                <text x="189" y="201">500</text>
                <text x="478" y="201">500</text>
              </svg>
              <div class="cfoot"><button>动态输入</button></div>
            </div>
            <footer class="status"><span>坐标 <b>(X: -176 Y: 681)</b></span><span>请选择下一点</span>
              <svg class="sizer" viewBox="0 0 12 12"><path d="M9 1H11M9 5H11M5 5H7M9 9H11M5 9H7M1 9H3" stroke="#b5b5b5" stroke-width="2"/></svg></footer>
          </div>
        </section>
      </div>
    </div>
  </section>
</main>

<div class="mini"><div class="mini-t"><span>Poi...</span><button aria-label="关闭"></button></div><button class="go">开始</button></div>

<form class="dialog" role="dialog" aria-labelledby="dt">
  <div class="dhead"><h2 id="dt">定义网格</h2><button type="button" aria-label="关闭"><svg><use href="#i-close"/></svg></button></div>
  <div class="dbody">
    <fieldset><legend><label for="hx">水平方向间距<b>(mm)=&gt;</b>间距<b>*</b>个数<b>,</b>间距<b>,</b>间距<b>*</b>个数<b>,</b>间距<b>,...</b></label></legend><textarea id="hx" spellcheck="false">500*1</textarea></fieldset>
    <fieldset><legend><label for="vx">垂直方向间距<b>(mm)=&gt;</b>间距<b>*</b>个数<b>,</b>间距<b>,</b>间距<b>*</b>个数<b>,</b>间距<b>,...</b></label></legend><textarea id="vx" spellcheck="false">500*1</textarea></fieldset>
    <div class="dbtns"><button type="button">确定</button><button type="button">取消</button></div>
  </div>
</form>
<svg class="spark" viewBox="0 0 24 6" aria-hidden="true"><path d="M0 6Q8 0 20 0L24 6Z" fill="#ee6a3c"/></svg>
<script src="script.js"></script>
</body>
</html>
```
FILE: styles.css
```css
* { box-sizing: border-box; }
html, body { height: 100%; }
body {
  margin: 0;
  display: flex;
  flex-direction: column;
  position: relative;
  overflow: hidden;
  background: #f0f0f0;
  color: #000;
  font: 12px/16px "Noto Sans", "Noto Sans CJK SC", sans-serif;
}
button, input, select, textarea { font: inherit; color: inherit; margin: 0; }
button { background: none; border: 0; padding: 0; white-space: nowrap; }
h1, h2 { margin: 0; font: inherit; }
ul { list-style: none; margin: 0; padding: 0; }
b { font: 10px/16px "DejaVu Sans Mono", monospace; }
.defs { position: absolute; }
.ic { width: 16px; height: 16px; flex: none; display: block; }

/* title bar */
.titlebar { height: 24px; flex: none; display: flex; align-items: center; gap: 5px; padding: 0 0 0 2px; background: #fff; color: #8c8c8c; position: relative; }
.titlebar h1 { flex: 1; white-space: nowrap; overflow: hidden; line-height: 20px; }
.titlebar h1 span { font: 13px/20px "Liberation Sans", sans-serif; }
.winbtns { display: flex; }
.winbtns button { width: 46px; height: 20px; display: grid; place-items: center; }
.winbtns svg { width: 12px; height: 12px; display: block; }
.score {
  position: absolute; right: 162px; top: -26px; width: 46px; height: 46px; border-radius: 50%; z-index: 2;
  background: #3fcc52; border: 2px solid #cfe3d2; box-shadow: 0 1px 5px #8888; color: #fff;
  text-align: center; padding-top: 24px; font-size: 12px; font-weight: 600; line-height: 16px;
}

/* menu bar */
.menubar { height: 29px; flex: none; display: flex; align-items: stretch; background: linear-gradient(#fff, #f4f4f4); }
.menus { display: flex; align-items: center; gap: 11px; padding: 0 7px; background: #f0f0f0; }
.menus .tb { margin-right: 0; }
.menus .tb + .tb { margin-left: -4px; }
.tip { flex: 0 1 188px; align-self: center; text-align: center; color: #5c2d0c; text-decoration: none; white-space: nowrap; }
.account { display: flex; align-items: center; padding-left: 7px; border-left: 1px solid #e4e4e4; }
.account .tb { margin-right: 8px; }
.account .dd { margin-left: 5px; }
.more { margin-left: auto; padding: 0 4px; align-self: flex-start; font-weight: 700; line-height: 18px; }

/* toolbars */
.toolrow { display: flex; height: 30px; flex: none; }
.toolbar { display: flex; align-items: center; background: linear-gradient(#fdfdfd, #f0f0f0); }
.tb { display: flex; align-items: center; gap: 4px; margin-right: 7px; flex: none; }
.off { color: #7d7d7d; }
.dd { width: 0; height: 0; border: 3px solid transparent; border-top-color: #111; border-bottom-width: 0; margin: 0 0 0 2px; }
.off .dd { border-top-color: #666; }
.tight .dd { margin-left: -2px; }
.sep { width: 6px; height: 16px; border-left: 1px solid #b9b9b9; flex: none; }
.sep.thin { width: 3px; }
.sep.wide { width: 4px; margin-left: 3px; }
.tb-file { width: 151px; padding-left: 5px; flex: none; }
.tb-file .sep { height: 24px; width: 8px; }
.tb-file .tb { margin-right: 6px; }
.tb-calc { width: 552px; padding-left: 6px; flex: none; }
.tb-view { flex: 1; padding-left: 2px; overflow: hidden; }
.viewmode { display: flex; align-items: center; gap: 2px; width: 62px; height: 22px; padding-left: 2px; border: 1px solid #6e6e6e; margin-right: 4px; background: #f6f6f6; }
select { appearance: none; background: none; border: 0; padding: 0; outline: 0; }
.viewmode select { width: 28px; }

/* main area */
.main { flex: 1; min-height: 0; display: flex; gap: 2px; }
.side { width: 165px; flex: none; display: flex; flex-direction: column; padding: 1px 0; border-right: 1px solid #aaa; border-left: 2px solid #b5b5b5; }
.side-head { display: flex; align-items: center; gap: 8px; height: 15px; border: 1px solid #999; margin: 0 0 2px -2px; padding-right: 2px; }
.side-head span { flex: 1; line-height: 13px; }
.side-head svg { width: 10px; height: 10px; display: block; }
.bar { height: 22px; flex: none; border-top: 1px solid #aaa; border-bottom: 1px solid #fff; background: #efefef; }
.side-tools { height: 27px; flex: none; display: flex; gap: 7px; padding: 6px 5px; border-top: 1px solid #aaa; background: linear-gradient(90deg, #f0f0f0, #fff); }
.side-tools svg { width: 16px; height: 14px; display: block; }
.tree { flex: 1; min-height: 0; overflow: hidden; background: #fff; border: 1px solid #888; padding-top: 1px; }
.tree .row { display: flex; align-items: center; height: 16px; padding-left: 7px; white-space: nowrap; }
.tree .ch { width: 10px; height: 10px; margin-right: 6px; flex: none; }
.tree .row .ic { margin-right: 4px; }
.tree ul { margin-left: 12px; padding-left: 18px; border-left: 1px dotted #888; }
.tree ul li { display: flex; align-items: center; height: 16px; white-space: nowrap; }
.tree ul li::before {
  content: ""; width: 11px; height: 16px; flex: none;
  background:
    repeating-linear-gradient(#777 0 1px, transparent 1px 2px) 0 0 / 1px 100% no-repeat,
    repeating-linear-gradient(90deg, #777 0 1px, transparent 1px 2px) 0 8px / 100% 1px no-repeat;
}
.tree ul li:last-child::before { background-size: 1px 8px, 100% 1px; }
.tree ul li span { padding: 0 4px; }
.cur .ic, .cur span { background: #d9d9d9; }

.work { flex: 1; min-width: 0; display: flex; flex-direction: column; }
.tb-comp { height: 29px; flex: none; padding-left: 8px; }
.floor { display: flex; align-items: center; gap: 7px; margin-right: 4px; }
.floor > span { display: flex; align-items: center; width: 61px; height: 24px; background: #fff; padding-right: 4px; }
.floor select { flex: 1; width: 40px; }
.panes { flex: 1; min-height: 0; display: flex; gap: 4px; padding-left: 4px; }
.comp { width: 183px; flex: none; display: flex; flex-direction: column; padding-top: 5px; }
.search { display: flex; height: 25px; padding-left: 1px; flex: none; }
.search input { flex: 1; min-width: 0; height: 24px; border: 1px solid #7a7a7a; padding: 0 2px; background: #fff; }
.search input::placeholder { color: #767676; }
.search button { width: 25px; display: grid; place-items: center; background: #fff; border-bottom: 1px solid #ccc; }
.ctree ul { margin-left: 31px; padding-left: 0; border: 0; }
.ctree ul li::before { width: 10px; }
.ctree ul li span { padding: 0 5px; }
.sel .ic, .sel span { background: #2b60c4; }

.props { flex: 1; min-width: 0; position: relative; display: flex; flex-direction: column; background: #fff; padding-bottom: 1px; }
.ptab { width: 63px; height: 22px; flex: none; padding: 2px 6px; border: 1px solid #ccc; border-bottom: 0; }
.pbody { flex: 1; min-height: 0; border: 1px solid #ccc; border-top: 0; padding: 3px 3px 1px; margin-right: 1px; }
.grid { height: 100%; display: flex; border: 1px solid #999; }
.grid table { flex: 1; align-self: flex-start; border-collapse: collapse; table-layout: fixed; width: 100%; }
.c1 { width: 22px; }
.c2 { width: 188px; }
.grid th, .grid td { height: 19px; padding: 0; border-bottom: 1px solid #b4b4b4; border-right: 1px solid #b4b4b4; font-weight: 400; line-height: 16px; }
.grid th { background: linear-gradient(#fff, #eee); }
.grid thead th { height: 23px; background: linear-gradient(#fdfdfd, #eee); }
.grid td { padding-left: 19px; text-align: left; }
.link td { color: #0000e0; }
.dim td { color: #808080; }
.on td { background: #0078d7; color: #fff; }
.grid .on th { background: #fdc578; color: #7a2a10; }
.scroll { width: 16px; flex: none; display: flex; flex-direction: column; background: #f0f0f0; }
.scroll button { height: 17px; display: grid; place-items: center; }
.scroll svg { width: 10px; height: 10px; display: block; }
.thumb { height: 55%; background: #cdcdcd; margin-bottom: auto; }

/* section editor window */
.child { position: absolute; left: 158px; top: 20px; right: 22px; bottom: 3px; display: flex; flex-direction: column; padding: 0 5px 8px 8px; border: 1px solid #3c444c; background: linear-gradient(#bccbda, #d9e4f1 30px); }
.child h2 { height: 30px; padding-top: 10px; color: #85909b; }
.cbody { flex: 1; min-height: 0; display: flex; flex-direction: column; background: #f0f0f0; }
.ctabs { height: 20px; display: flex; align-items: flex-end; }
.ctabs button { width: 45px; height: 18px; text-align: left; padding-left: 4px; border: 1px solid #d4d4d4; border-bottom: 0; }
.ctabs .active { width: 50px; height: 20px; padding-left: 6px; background: #fff; border: 0; }
.cpage { flex: 1; min-height: 0; display: flex; flex-direction: column; background: #fff; border: 1px solid #d4d4d4; border-left: 0; margin-right: 2px; padding: 4px 2px 2px 3px; }
.ctb { height: 27px; flex: none; padding-left: 4px; white-space: nowrap; }
.ctb + .ctb { margin-bottom: 1px; }
.grip { width: 2px; height: 16px; margin-right: 5px; flex: none; background: repeating-linear-gradient(#aaa 0 2px, transparent 2px 4px); }
.rad { display: flex; align-items: center; gap: 9px; margin-right: 8px; }
.rad input { appearance: none; width: 11px; height: 11px; border: 1px solid #555; border-radius: 50%; background: #fff; }
.rad input:checked { background: radial-gradient(#111 0 3px, #fff 3px); }
.num { display: flex; align-items: center; gap: 6px; margin-right: 13px; font-size: 13px; }
.spin { display: flex; width: 78px; height: 23px; border: 1px solid #777; background: #f8f8f8; color: #888; }
.spin input { flex: 1; min-width: 0; border: 0; background: none; text-align: right; padding: 0 4px; }
.spin > span { width: 13px; display: flex; flex-direction: column; }
.spin button { flex: 1; display: grid; place-items: center; }
.spin .dd { margin: 0; border-top-color: #555; }
.up { border: 3px solid transparent; border-bottom-color: #555; border-top-width: 0; }
.canvas { flex: 1; min-height: 0; width: 100%; display: block; background: #000; }
.canvas text { fill: #1ee61e; font: 700 13px "DejaVu Sans", sans-serif; text-anchor: middle; }
.canvas .ghost { fill: #b0b0b0; font: 12px "Liberation Sans", sans-serif; }
.cfoot { height: 27px; flex: none; padding: 2px; background: #f0f0f0; }
.cfoot button { height: 24px; padding: 0 4px; border: 1px solid #2f7fc4; background: #e0edf8; }
.status { display: flex; align-items: center; height: 20px; flex: none; margin-top: 3px; border-top: 1px solid #d4d4d4; background: linear-gradient(#fff, #f0f0f0); }
.status span { padding-left: 1px; }
.status span:first-child { width: 148px; border-right: 1px solid #ccc; }
.status span + span { padding-left: 3px; }
.sizer { width: 12px; height: 12px; margin-left: auto; }

/* floating recorder */
.mini { position: absolute; left: 39px; top: 183px; width: 52px; background: #fff; box-shadow: 1px 2px 6px #0006; }
.mini-t { height: 23px; display: flex; justify-content: space-between; color: #999; padding-left: 3px; line-height: 22px; }
.mini-t button { width: 19px; height: 20px; background: #e2e2e2; }
.go { display: block; width: 52px; height: 23px; background: #e8e8e8; border: 1px solid #777; border-right: 2px solid #555; border-bottom: 2px solid #555; }

/* grid dialog */
.dialog { position: absolute; left: 292px; top: 328px; width: 411px; background: #f0f0f0; border: 1px solid #3b8edb; box-shadow: 0 4px 14px #0007; }
.dhead { height: 25px; display: flex; align-items: center; justify-content: space-between; padding: 0 9px 0 3px; background: #fff; }
.dhead svg { width: 12px; height: 12px; display: block; }
.dbody { padding: 14px 13px 8px; }
fieldset { min-width: 0; margin: 0 0 7px; padding: 1px 9px 6px 7px; border: 1px solid #dcdcdc; height: 66px; }
legend { padding: 0 3px 0 0; line-height: 16px; }
textarea { display: block; width: 100%; height: 41px; resize: none; outline: 0; border: 1px solid #7a7a7a; border-radius: 0; padding: 0 2px; background: #fff; font: 10px/16px "DejaVu Sans Mono", monospace; }
textarea:focus { border-color: #0f6fbf; }
textarea::selection { background: #0b6fc6; color: #fff; }
.dbtns { display: flex; justify-content: flex-end; gap: 15px; padding: 5px 1px 0 0; }
.dbtns button { width: 72px; height: 23px; background: #e1e1e1; border: 1px solid #adadad; }
.spark { position: absolute; right: 181px; bottom: 0; width: 24px; height: 5px; }
```
FILE: script.js
```js
// The first spacing box opens focused with its text selected.
const first = document.getElementById("hx");
first.focus();
first.select();
```
